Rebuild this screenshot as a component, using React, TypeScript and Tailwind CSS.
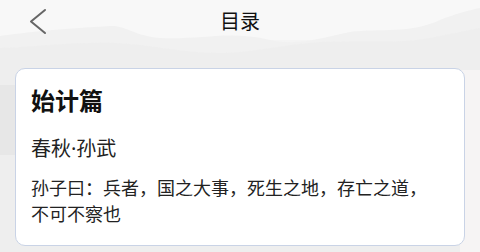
function Backdrop() {
  // faint ink-wash mountains behind the header
  return (
    <svg className="absolute inset-0 w-full h-full pointer-events-none" viewBox="0 0 480 252" preserveAspectRatio="none">
      <rect width="480" height="252" fill="#f4f4f4" />
      <rect width="480" height="40" fill="#f8f8f8" />
      <path d="M0 36 C40 30 80 28 110 26 C125 25 135 36 160 38 C200 40 230 30 270 40 C300 46 320 38 350 32 C380 28 410 34 440 20 C455 14 470 10 480 8 L480 252 L0 252 Z" fill="#f1f1f1" />
      <path d="M0 48 C50 46 90 40 130 44 C170 48 200 56 240 52 C270 49 290 44 320 42 C360 40 400 44 430 38 C450 34 470 30 480 28 L480 252 L0 252 Z" fill="#eeeeee" opacity="0.8" />
      <path d="M0 85 L20 85 L20 155 L0 155 Z" fill="#e7e7e7" />
      <path d="M460 70 L480 70 L480 252 L460 252 Z" fill="#f6f4f4" />
    </svg>
  );
}

export default function App() {
  return (
    <div
      className="relative w-[480px] h-[252px] overflow-hidden"
      style={{ fontFamily: '"Noto Sans", "Noto Sans CJK SC", sans-serif' }}
    >
      <Backdrop />
      <div className="relative">
        <header className="relative h-[44px] flex items-center justify-center">
          <svg className="absolute left-[28px] top-[8px]" width="20" height="28" viewBox="0 0 20 28">
            <polyline points="17,2 3,13.5 17,25" fill="none" stroke="#666" strokeWidth="2" strokeLinecap="round" strokeLinejoin="round" />
          </svg>
          <h1 className="text-[20px] leading-[28px] text-[#111]">目录</h1>
        </header>

        <div className="mx-[15px] mt-[24px] bg-white border border-[#c9d3e6] rounded-[10px] px-[15px] pt-[16px] pb-[18px]">
          <h2 className="text-[24px] leading-[32px] font-bold text-[#111]">始计篇</h2>
          <p className="mt-[18px] text-[20px] leading-[28px] text-[#222]">春秋·孙武</p>
          <p className="mt-[12px] pr-[10px] text-[18px] leading-[26px] text-[#222]">
            孙子曰：兵者，国之大事，死生之地，存亡之道，不可不察也
          </p>
        </div>
      </div>
    </div>
  );
}
